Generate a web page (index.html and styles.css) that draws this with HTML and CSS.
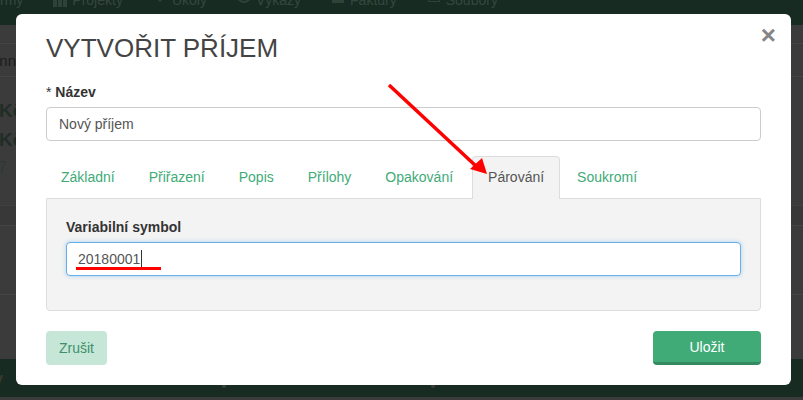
FILE: index.html
```html
<!DOCTYPE html>
<html lang="cs">
<head>
  <meta charset="UTF-8">
  <meta name="viewport" content="width=device-width, initial-scale=1">
  <title>Vytvořit příjem</title>
  <link rel="stylesheet" href="styles.css">
</head>
<body>

  <!-- Page behind the dialog -->
  <div class="page">
    <nav class="topnav">
      <span class="nav-item nav-first">rmy</span>
      <span class="nav-item">
        <svg class="nav-icon" viewBox="0 0 14 14"><path d="M0 0h4v14H0zM5 0h4v14H5zM10 0h4v14h-4z"/></svg>
        Projekty
      </span>
      <span class="nav-item">
        <svg class="nav-icon" viewBox="0 0 14 14"><path d="M1 3l6 6 6-6v-3H1z"/></svg>
        Úkoly
      </span>
      <span class="nav-item">
        <svg class="nav-icon" viewBox="0 0 14 14"><circle cx="7" cy="3" r="6" fill="none" stroke="#2f4238" stroke-width="2"/></svg>
        Výkazy
      </span>
      <span class="nav-item">
        <svg class="nav-icon" viewBox="0 0 14 14"><path d="M1 0h12v10H1z"/></svg>
        Faktury
      </span>
      <span class="nav-item">
        <svg class="nav-icon" viewBox="0 0 14 14"><path d="M1.500 0v8.500h11V0" fill="none" stroke="#2f4238"/></svg>
        Soubory
      </span>
    </nav>

    <div class="row row-tabs"></div>
    <div class="row row-search">enná</div>
    <div class="amounts">
      <p class="amount">Kč</p>
      <p class="amount">Kč</p>
      <p class="count">7</p>
    </div>
    <div class="row row-dark"></div>
    <div class="row row-plain"></div>
    <div class="row-rest"></div>
    <footer class="bottombar">
      <span class="foot-text">v</span>
      <span class="foot-mark"></span>
      <span class="foot-mark"></span>
    </footer>
  </div>

  <!-- Dialog -->
  <div class="modal">
    <button class="close" type="button">×</button>
    <h1>VYTVOŘIT PŘÍJEM</h1>

    <label class="field-label"><span class="req">*</span> Název</label>
    <input class="text-input" type="text" value="Nový příjem">

    <ul class="tabs">
      <li>Základní</li>
      <li>Přiřazení</li>
      <li>Popis</li>
      <li>Přílohy</li>
      <li>Opakování</li>
      <li class="active">Párování</li>
      <li>Soukromí</li>
    </ul>

    <div class="tab-panel">
      <label class="field-label">Variabilní symbol</label>
      <div class="text-input focused"><span class="typed">20180001</span></div>
    </div>

    <div class="modal-actions">
      <button class="btn btn-cancel" type="button">Zrušit</button>
      <button class="btn btn-save" type="button">Uložit</button>
    </div>
  </div>

  <!-- Red annotations drawn on top of the screenshot -->
  <svg class="marks" viewBox="0 0 803 400">
    <path d="M389 85L477 167" stroke="#f00" stroke-width="3.500" fill="none"/>
    <path d="M487 174L470 169L482 158z" fill="#f00"/>
    <path d="M76 268.500H161" stroke="#f00" stroke-width="3" fill="none"/>
  </svg>

</body>
</html>
```

FILE: styles.css
```css
* {
  box-sizing: border-box;
}

body {
  margin: 0;
  height: 400px;
  overflow: hidden;
  background: #3b3b3b;
  font-family: "Liberation Sans", Arial, sans-serif;
  font-size: 14px;
  color: #333;
}

/* Background page */
.page {
  height: 400px;
  display: flex;
  flex-direction: column;
  overflow: hidden;
}

.topnav {
  flex: none;
  height: 25px;
  background: #182b22;
  display: flex;
  gap: 30px;
  overflow: hidden;
}

.nav-item {
  display: flex;
  gap: 5px;
  height: 16px;
  margin-top: -8px;
  line-height: 16px;
  font-size: 14px;
  color: #35473d;
  white-space: nowrap;
}

.nav-icon {
  width: 14px;
  height: 14px;
  margin-top: 1px;
  fill: #2f4238;
}

.row {
  flex: none;
  border-bottom: 1px solid #444;
}

.row-tabs {
  height: 19px;
}

.row-search {
  height: 33px;
  line-height: 33px;
  font-size: 15px;
  color: #1d1d1d;
  margin-left: -9px;
}

.amounts {
  flex: none;
  height: 128px;
  padding-top: 24px;
}

.amount {
  margin: 0 0 9px -1px;
  height: 20px;
  line-height: 20px;
  font-size: 19px;
  font-weight: bold;
  color: #1f2d26;
}

.count {
  margin: 3px 0 0 -2px;
  font-size: 16px;
  color: #2b3a33;
}

.row-dark {
  height: 21px;
  background: #383838;
  border-top: 1px solid #404040;
}

.row-plain {
  height: 69px;
}

.row-rest {
  flex: 1;
}

.bottombar {
  flex: none;
  display: flex;
  height: 38px;
  margin-bottom: 3px;
  background: #182b22;
}

.foot-text {
  margin: 11px 0 0 -5px;
  width: 227px;
  font-size: 14px;
  font-weight: bold;
  color: #3a3a30;
}

.foot-mark {
  width: 4px;
  height: 3px;
  margin: 26px 205px 0 0;
  border-radius: 0 0 2px 2px;
  background: #3c3c3c;
}

/* Dialog */
.modal {
  position: absolute;
  left: 16px;
  top: 14px;
  width: 775px;
  height: 371px;
  padding: 0 30px;
  background: #fff;
  border-radius: 6px;
}

.close {
  position: absolute;
  top: 8px;
  right: 15px;
  padding: 0;
  border: 0;
  background: none;
  font-family: inherit;
  font-size: 26px;
  font-weight: bold;
  line-height: 26px;
  color: #858585;
}

h1 {
  margin: 0;
  padding-top: 19px;
  height: 66px;
  font-size: 26px;
  line-height: 30px;
  font-weight: normal;
  color: #444;
}

.field-label {
  display: block;
  height: 20px;
  margin: 2px 0 5px;
  line-height: 20px;
  font-weight: bold;
  color: #333;
}

.req {
  font-weight: normal;
}

.text-input {
  display: block;
  width: 100%;
  height: 34px;
  padding: 6px 12px;
  border: 1px solid #ccc;
  border-radius: 4px;
  background: #fff;
  font-family: inherit;
  font-size: 14px;
  line-height: 20px;
  color: #555;
}

.focused {
  border-color: #66afe9;
  box-shadow: 0 0 4px rgba(102, 175, 233, 0.5);
}

.typed {
  display: inline-block;
  height: 18px;
  line-height: 18px;
  margin: 1px 0 0 -1px;
  padding-right: 1px;
  border-right: 1px solid #333;
  vertical-align: top;
}

/* Tabs */
.tabs {
  display: flex;
  gap: 2px;
  height: 42px;
  margin: 15px 0 0;
  padding: 0;
  list-style: none;
  color: #41ab78;
}

.tabs li {
  height: 42px;
  padding: 0 15px;
  border: 1px solid transparent;
  border-bottom: 0;
  border-radius: 4px 4px 0 0;
  line-height: 41px;
}

.tabs li:first-child {
  margin-left: -1px;
}

.tabs .active {
  position: relative;
  z-index: 1;
  height: 43px;
  margin: 0 -1px -1px 1px;
  background: #f3f3f3;
  border-color: #ddd;
  color: #555;
}

.tab-panel {
  height: 113px;
  padding: 17px 19px 0;
  background: #f3f3f3;
  border: 1px solid #ddd;
  border-radius: 0 0 4px 4px;
}

.tab-panel .field-label {
  margin: 1px 0 5px;
}

.modal-actions {
  display: flex;
  justify-content: space-between;
  margin-top: 20px;
}

.btn {
  height: 34px;
  padding: 0;
  border: 0;
  border-radius: 4px;
  font-family: inherit;
  font-size: 14px;
}

.btn-cancel {
  width: 61px;
  background: #c6e7d7;
  color: #3f8f6c;
}

.btn-save {
  width: 108px;
  background: #41ab78;
  border-bottom: 3px solid #358a61;
  color: #fff;
}

/* Annotations */
.marks {
  position: absolute;
  z-index: 2;
  left: 0;
  top: 0;
  width: 803px;
  height: 400px;
  pointer-events: none;
}
```
